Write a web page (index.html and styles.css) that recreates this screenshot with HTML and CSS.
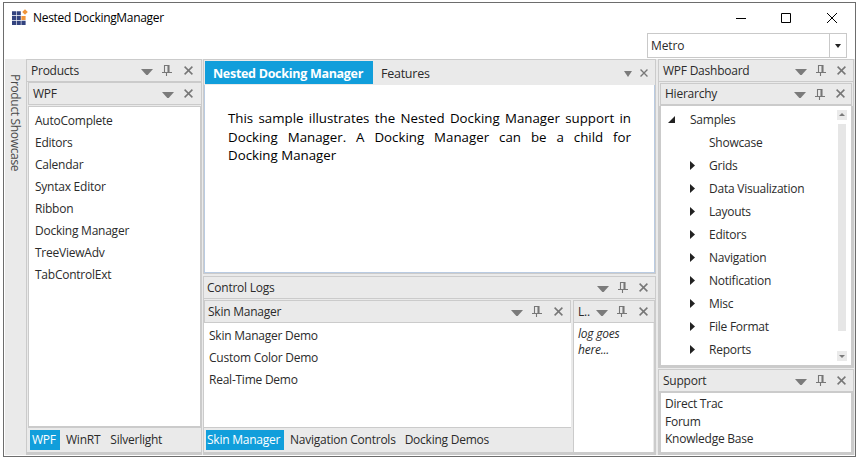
FILE: index.html
```
<!DOCTYPE html>
<html lang="en">
<head>
<meta charset="utf-8">
<title>Nested DockingManager</title>
<link rel="stylesheet" href="styles.css">
</head>
<body>
<svg class="defs" aria-hidden="true">
  <symbol id="down" viewBox="0 0 12 6"><path d="M0 0H12L6.7 6H5.3Z" fill="#7b7b7b"/></symbol>
  <symbol id="pin" viewBox="0 0 10 11"><path d="M2.5 7V.5H7V7M6 1V7M0 7.5H10M4.5 8V11" fill="none" stroke="#777" stroke-width="1.1"/></symbol>
  <symbol id="close" viewBox="0 0 9 9"><path d="M.6.6L8.4 8.4M8.4.6L.6 8.4" fill="none" stroke="#777" stroke-width="1.5"/></symbol>
</svg>
<div class="window">
  <header class="titlebar">
    <svg class="logo" width="17" height="16" viewBox="0 0 17 16">
      <path fill="#33437f" d="M0 1.3h4.2v4H0zM4.8 1.3h4v4h-4zM0 6h4.2v4H0zM4.8 6h4v4h-4zM0 10.7h4.2v4.2H0zM4.8 10.7h4v4.2h-4zM9.4 10.7h4.2v4.2H9.4z"/>
      <path fill="#f0953a" d="M9.4 6h4.2v4H9.4zM13 -.8l2.8 2.8L13 4.8 10.2 2z"/>
    </svg>
    <span class="title">Nested DockingManager</span>
    <svg class="controls" width="102" height="12" viewBox="0 0 102 12" fill="none" stroke="#000">
      <path d="M0 6.5H10"/><path d="M45.5 1.5h9v9h-9z"/><path d="M91 1L101 11M101 1L91 11"/>
    </svg>
  </header>
  <div class="toolbar">
    <div class="combo"><span>Metro</span><i><svg width="6" height="4"><path d="M0 0H6L3 4Z" fill="#222"/></svg></i></div>
  </div>
  <main class="dock">
    <aside class="strip"><span>Product Showcase</span></aside>

    <section class="pane products">
      <div class="head"><b>Products</b><svg class="dn"><use href="#down"/></svg><svg class="pn"><use href="#pin"/></svg><svg class="cl"><use href="#close"/></svg></div>
      <div class="head sub"><b>WPF</b><svg class="dn"><use href="#down"/></svg><svg class="cl"><use href="#close"/></svg></div>
      <ul class="list">
        <li>AutoComplete</li><li>Editors</li><li>Calendar</li><li>Syntax Editor</li><li>Ribbon</li><li>Docking Manager</li><li>TreeViewAdv</li><li>TabControlExt</li>
      </ul>
      <nav class="tabs"><span class="on">WPF</span><span>WinRT</span><span>Silverlight</span></nav>
    </section>

    <div class="center">
      <section class="document">
        <div class="doctabs"><span class="on">Nested Docking Manager</span><span>Features</span>
          <svg class="menu" width="8" height="7"><path d="M0 1H8L4 7Z" fill="#7b7b7b"/></svg><svg class="x" width="8" height="8" viewBox="0 0 9 9"><use href="#close"/></svg></div>
        <div class="page"><p>This sample illustrates the Nested Docking Manager support in Docking Manager. A Docking Manager can be a child for Docking&nbsp;Manager</p></div>
      </section>
      <section class="pane logs">
        <div class="head"><b>Control Logs</b><svg class="dn"><use href="#down"/></svg><svg class="pn"><use href="#pin"/></svg><svg class="cl"><use href="#close"/></svg></div>
        <div class="split">
          <div class="skin">
            <div class="head sub"><b>Skin Manager</b><svg class="dn"><use href="#down"/></svg><svg class="pn"><use href="#pin"/></svg><svg class="cl"><use href="#close"/></svg></div>
            <ul class="list"><li>Skin Manager Demo</li><li>Custom Color Demo</li><li>Real-Time Demo</li></ul>
            <nav class="tabs"><span class="on">Skin Manager</span><span>Navigation Controls</span><span>Docking Demos</span></nav>
          </div>
          <div class="log">
            <div class="head sub"><b>L..</b><svg class="dn"><use href="#down"/></svg><svg class="pn"><use href="#pin"/></svg><svg class="cl"><use href="#close"/></svg></div>
            <div class="logtext">log goes<br>here...</div>
          </div>
        </div>
      </section>
    </div>

    <div class="right">
      <section class="pane dashboard">
        <div class="head"><b>WPF Dashboard</b><svg class="dn"><use href="#down"/></svg><svg class="pn"><use href="#pin"/></svg><svg class="cl"><use href="#close"/></svg></div>
        <div class="head sub"><b>Hierarchy</b><svg class="dn"><use href="#down"/></svg><svg class="pn"><use href="#pin"/></svg><svg class="cl"><use href="#close"/></svg></div>
        <div class="treebox">
          <ul class="tree">
            <li class="root"><svg width="7" height="7"><path d="M7 0V7H0Z" fill="#222"/></svg>Samples</li>
            <li><i></i>Showcase</li>
            <li><i class="arrow"></i>Grids</li>
            <li><i class="arrow"></i>Data Visualization</li>
            <li><i class="arrow"></i>Layouts</li>
            <li><i class="arrow"></i>Editors</li>
            <li><i class="arrow"></i>Navigation</li>
            <li><i class="arrow"></i>Notification</li>
            <li><i class="arrow"></i>Misc</li>
            <li><i class="arrow"></i>File Format</li>
            <li><i class="arrow"></i>Reports</li>
          </ul>
          <div class="scroll"><svg width="10" height="10"><path d="M2 6L5 3L8 6Z" fill="#7b7b7b"/></svg><div class="thumb"></div><svg width="10" height="10"><path d="M2 4H8L5 7Z" fill="#7b7b7b"/></svg></div>
        </div>
      </section>
      <section class="pane support">
        <div class="head"><b>Support</b><svg class="dn"><use href="#down"/></svg><svg class="pn"><use href="#pin"/></svg><svg class="cl"><use href="#close"/></svg></div>
        <div class="links">Direct Trac<br>Forum<br>Knowledge Base</div>
      </section>
    </div>
  </main>
</div>
</body>
</html>
```
FILE: styles.css
```
* { box-sizing: border-box; }
body { margin: 0; width: 858px; height: 460px; padding: 2px 2px 3px 3px; overflow: hidden; background: #fff; color: #2b2b2b; font: 12px/16px "Open Sans", sans-serif; letter-spacing: -.24px; }
ul, p { margin: 0; padding: 0; list-style: none; }
svg { display: block; flex: none; }
.defs { width: 0; height: 0; position: absolute; }
.window { width: 853px; height: 455px; border: 1px solid #6d6d6d; }
.titlebar { height: 30px; display: flex; align-items: center; padding: 0 17px 0 8px; color: #000; letter-spacing: -.32px; }
.logo { overflow: visible; }
.title { margin-left: 4px; }
.controls { margin-left: auto; }
.toolbar { height: 26px; display: flex; justify-content: flex-end; padding-right: 8px; }
.combo { width: 200px; height: 25px; border: 1px solid #c9c9c9; display: flex; line-height: 23px; padding-left: 3px; letter-spacing: -.1px; }
.combo span { flex: 1; }
.combo i { width: 17px; border-left: 1px solid #c9c9c9; display: flex; align-items: center; justify-content: center; }
.dock { height: 396px; margin-left: 1px; width: 850px; display: flex; background: #eaeaea; }
.strip { width: 21px; padding: 15px 0 0 2px; color: #4a4a4a; }
.strip span { display: block; writing-mode: vertical-rl; line-height: 16px; white-space: nowrap; letter-spacing: -.33px; }
.pane { border: 1px solid #cbcbcb; background: #eaeaea; }
.head { height: 22px; display: flex; align-items: center; padding: 0 8px 0 4px; border-bottom: 1px solid #cbcbcb; white-space: nowrap; }
.head b { font-weight: 400; flex: 1; }
.sub { height: 23px; border: 1px solid #cbcbcb; }
.dn { width: 12px; height: 6px; margin-top: 2px; }
.pn { width: 10px; height: 11px; margin: 0 0 0 9px; }
.cl { width: 9px; height: 9px; margin: -1px 0 0 12px; }
.list { background: #fff; }
.list li { height: 22px; line-height: 22px; }
.tabs { display: flex; align-items: center; padding: 0; white-space: nowrap; }
.tabs span { height: 20px; line-height: 20px; padding: 0 3px; }
.on { background: #119edb; color: #fff; }

.products { width: 176px; height: 396px; display: flex; flex-direction: column; border-bottom: 3px solid #cbcbcb; }
.products .sub { margin: 0 0 1px 1px; padding: 0 8px 0 4px; border-right: 0; }
.products .sub .cl { margin-left: 10px; }
.products .list { margin-left: 1px; height: 322px; padding: 3px 0 0 6px; border: 1px solid #cbcbcb; border-bottom-width: 2px; }
.products .tabs { flex: 1; padding: 0 0 0 3px; gap: 3px; }
.products .tabs .on { width: 30px; padding: 0 2px; }
.products .tabs span + span + span { margin-left: 1px; }

.center { width: 453px; margin-left: 1px; }
.document { height: 215px; border: 1px solid #cbcbcb; display: flex; flex-direction: column; }
.doctabs { height: 25px; display: flex; padding: 1px 7px 0 1px; align-items: flex-start; line-height: 25px; font-size: 12.5px; letter-spacing: -.25px; }
.doctabs span { height: 23px; padding: 0 8px; }
.doctabs .on { width: 168px; font-weight: 700; white-space: nowrap; letter-spacing: -.29px; }
.menu { margin: 9px 8px 0 auto; }
.x { margin-top: 8px; }
.page { flex: 1; background: #fff; border: 1px solid #b9cbe2; border-top: 0; padding: 24px 23px; color: #000; font-size: 13.3px; line-height: 18.5px; letter-spacing: 0; }
.page p { text-align: justify; }
.logs { height: 179px; margin-top: 2px; border-bottom: 3px solid #cbcbcb; }
.logs > .head { padding: 0 7px 0 3px; }
.logs > .head .cl { margin-left: 11px; }
.split { display: flex; height: 153px; padding-top: 1px; }
.skin { width: 367px; }
.skin .head { padding: 0 7px 0 3px; }
.skin .list { height: 105px; padding: 2px 0 0 5px; border-bottom: 1px solid #cbcbcb; }
.skin .tabs { height: 24px; padding: 0 0 0 2px; gap: 3px; }
.skin .tabs .on { padding: 0 1px; width: 78px; }
.log { flex: 1; margin-left: 2px; border: solid #cbcbcb; border-width: 0 1px; display: flex; flex-direction: column; }
.log .head { border-width: 1px 0; padding: 0 6px 0 4px; }
.logtext { flex: 1; background: #fff; margin-right: 1px; padding: 3px 4px; font-style: italic; }

.right { margin-left: 2px; width: 196px; }
.right .head { padding-right: 7px; }
.right .cl { margin-left: 11px; }
.dashboard { height: 309px; border-bottom: 3px solid #cbcbcb; }
.dashboard .sub { margin: 1px 1px 0; padding-right: 6px; border-bottom-width: 2px; }
.treebox { height: 259px; border: solid #cbcbcb; border-width: 0 2px; background: #fff; display: flex; justify-content: space-between; padding-top: 2px; }
.tree li { height: 23px; line-height: 24px; display: flex; align-items: center; white-space: nowrap; }
.tree .root svg { margin: 0 15px 0 7px; }
.tree i { width: 5px; height: 9px; margin: 0 14px 0 29px; }
.tree .arrow { background: #222; clip-path: polygon(0 0, 100% 50%, 0 100%); }
.scroll { width: 10px; margin: 2px 4px 0 0; height: 251px; display: flex; flex-direction: column; }
.scroll svg { background: #eaeaea; }
.thumb { height: 207px; margin: 4px 1px 20px; background: #e6e6e6; }
.support { height: 86px; margin-top: 1px; border-bottom: 3px solid #cbcbcb; }
.support .head { border-bottom-width: 2px; height: 23px; }
.links { height: 59px; border: solid #cbcbcb; border-width: 0 2px; background: #fff; padding: 2px 4px; line-height: 17.5px; }
```
